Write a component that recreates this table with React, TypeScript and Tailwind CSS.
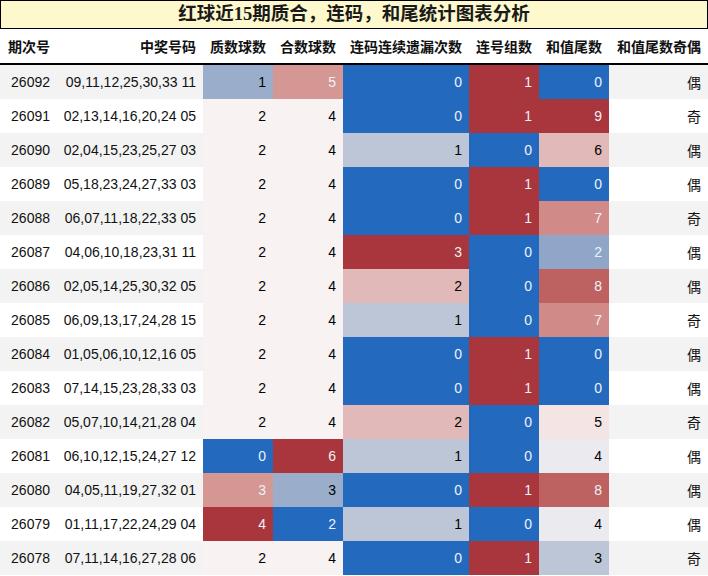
import React from "react";

type Row = {
  no: string;
  balls: string;
  prime: number;
  comp: number;
  gap: number;
  link: number;
  tail: number;
  odd: string;
};

const rows: Row[] = [
  { no: "26092", balls: "09,11,12,25,30,33 11", prime: 1, comp: 5, gap: 0, link: 1, tail: 0, odd: "偶" },
  { no: "26091", balls: "02,13,14,16,20,24 05", prime: 2, comp: 4, gap: 0, link: 1, tail: 9, odd: "奇" },
  { no: "26090", balls: "02,04,15,23,25,27 03", prime: 2, comp: 4, gap: 1, link: 0, tail: 6, odd: "偶" },
  { no: "26089", balls: "05,18,23,24,27,33 03", prime: 2, comp: 4, gap: 0, link: 1, tail: 0, odd: "偶" },
  { no: "26088", balls: "06,07,11,18,22,33 05", prime: 2, comp: 4, gap: 0, link: 1, tail: 7, odd: "奇" },
  { no: "26087", balls: "04,06,10,18,23,31 11", prime: 2, comp: 4, gap: 3, link: 0, tail: 2, odd: "偶" },
  { no: "26086", balls: "02,05,14,25,30,32 05", prime: 2, comp: 4, gap: 2, link: 0, tail: 8, odd: "偶" },
  { no: "26085", balls: "06,09,13,17,24,28 15", prime: 2, comp: 4, gap: 1, link: 0, tail: 7, odd: "奇" },
  { no: "26084", balls: "01,05,06,10,12,16 05", prime: 2, comp: 4, gap: 0, link: 1, tail: 0, odd: "偶" },
  { no: "26083", balls: "07,14,15,23,28,33 03", prime: 2, comp: 4, gap: 0, link: 1, tail: 0, odd: "偶" },
  { no: "26082", balls: "05,07,10,14,21,28 04", prime: 2, comp: 4, gap: 2, link: 0, tail: 5, odd: "奇" },
  { no: "26081", balls: "06,10,12,15,24,27 12", prime: 0, comp: 6, gap: 1, link: 0, tail: 4, odd: "偶" },
  { no: "26080", balls: "04,05,11,19,27,32 01", prime: 3, comp: 3, gap: 0, link: 1, tail: 8, odd: "偶" },
  { no: "26079", balls: "01,11,17,22,24,29 04", prime: 4, comp: 2, gap: 1, link: 0, tail: 4, odd: "偶" },
  { no: "26078", balls: "07,11,14,16,27,28 06", prime: 2, comp: 4, gap: 0, link: 1, tail: 3, odd: "奇" },
];

// colour scale classes, blue (low) -> near white -> red (high)
const BLUE = "bg-[#2369be] text-[#eef2f8]";
const RED = "bg-[#a8363c] text-[#eef2f8]";

const primeColor: Record<number, string> = {
  0: BLUE,
  1: "bg-[#9aaecb] text-black",
  2: "bg-[#f8f2f2] text-black",
  3: "bg-[#d49793] text-[#eef2f8]",
  4: RED,
};

const compColor: Record<number, string> = {
  2: BLUE,
  3: "bg-[#9aaecb] text-black",
  4: "bg-[#f8f2f2] text-black",
  5: "bg-[#d49793] text-[#eef2f8]",
  6: RED,
};

const gapColor: Record<number, string> = {
  0: BLUE,
  1: "bg-[#bcc6d6] text-black",
  2: "bg-[#e0b9b8] text-black",
  3: RED,
};

const linkColor: Record<number, string> = {
  0: BLUE,
  1: RED,
};

const tailColor: Record<number, string> = {
  0: BLUE,
  2: "bg-[#90a6c8] text-[#eef2f8]",
  3: "bg-[#bcc6d6] text-black",
  4: "bg-[#ebeaee] text-black",
  5: "bg-[#f4e4e4] text-black",
  6: "bg-[#e0b9b8] text-black",
  7: "bg-[#d08b89] text-[#eef2f8]",
  8: "bg-[#bd6260] text-[#eef2f8]",
  9: RED,
};

const cols = "grid grid-cols-[57px_146px_70px_70px_126px_70px_70px_99px]";
const cell = "flex items-center justify-end pr-[7px]";

const headers = ["期次号", "中奖号码", "质数球数", "合数球数", "连码连续遗漏次数", "连号组数", "和值尾数", "和值尾数奇偶"];

export default function App() {
  return (
    <div className="w-[708px] h-[576px] bg-white font-['Liberation_Sans','Noto_Sans_CJK_SC',sans-serif] text-[14px] text-[#111] overflow-hidden">
      <div className="h-[29px] border border-black bg-[#fef8cd] flex items-center justify-center">
        <span className="font-['Liberation_Serif','Noto_Sans_CJK_SC',serif] font-bold text-[18.5px] text-[#1a1a1a] leading-none">
          红球近15期质合，连码，和尾统计图表分析
        </span>
      </div>

      <div className={`${cols} h-[36px] border-b-2 border-black font-['Noto_Sans_CJK_SC',sans-serif] font-bold`}>
        {headers.map((h) => (
          <div key={h} className={cell}>
            {h}
          </div>
        ))}
      </div>

      {rows.map((r, i) => {
        const band = i % 2 === 0 ? "bg-[#f3f3f3]" : "bg-white";
        return (
          <div key={r.no} className={`${cols} h-[34px]`}>
            <div className={`${cell} ${band}`}>{r.no}</div>
            <div className={`${cell} ${band}`}>{r.balls}</div>
            <div className={`${cell} ${primeColor[r.prime]}`}>{r.prime}</div>
            <div className={`${cell} ${compColor[r.comp]}`}>{r.comp}</div>
            <div className={`${cell} ${gapColor[r.gap]}`}>{r.gap}</div>
            <div className={`${cell} ${linkColor[r.link]}`}>{r.link}</div>
            <div className={`${cell} ${tailColor[r.tail]}`}>{r.tail}</div>
            <div className={`${cell} ${band} font-['Noto_Sans_CJK_SC',sans-serif]`}>{r.odd}</div>
          </div>
        );
      })}
    </div>
  );
}
